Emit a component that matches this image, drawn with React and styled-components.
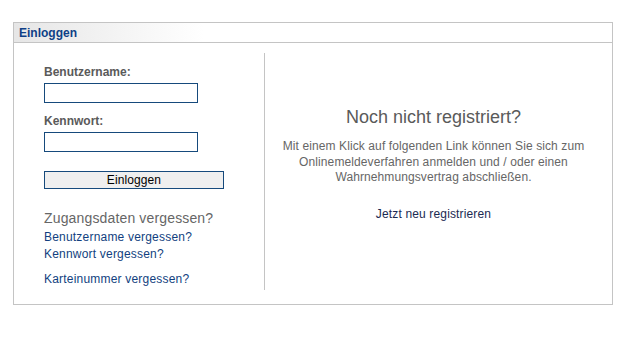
import React from 'react';
import styled, { createGlobalStyle } from 'styled-components';

const Global = createGlobalStyle`
  body {
    margin: 0;
    background: #fff;
    font-family: "Liberation Sans", Arial, sans-serif;
  }
`;

const Page = styled.div`
  padding: 22px 0 0 13px;
`;

const Box = styled.div`
  width: 598px;
  height: 281px;
  border: 1px solid #c4c4c4;
  display: flex;
  flex-direction: column;
`;

const Header = styled.div`
  height: 19px;
  border-bottom: 1px solid #c4c4c4;
  background: linear-gradient(90deg, #e6e6e6 0px, #f6f6f6 120px, #fff 190px);
  display: flex;
  align-items: center;
  padding-left: 5px;
`;

const HeaderTitle = styled.span`
  font-size: 12px;
  font-weight: bold;
  color: #0f3f86;
`;

const Body = styled.div`
  display: flex;
  padding: 10px 0 14px 0;
  flex: 1;
`;

const LeftCol = styled.div`
  width: 220px;
  padding-left: 30px;
  border-right: 1px solid #c4c4c4;
  display: flex;
  flex-direction: column;
`;

const Label = styled.label`
  font-size: 12px;
  line-height: 14px;
  font-weight: bold;
  color: #5a5a5a;
  margin-top: ${(p) => p.$top}px;
`;

const Input = styled.input`
  box-sizing: border-box;
  width: 154px;
  height: 20px;
  margin-top: 4px;
  border: 1px solid #164a7c;
  background: #fff;
  outline: none;
  padding: 0 3px;
`;

const Button = styled.button`
  box-sizing: border-box;
  width: 180px;
  height: 18px;
  margin-top: 19px;
  border: 1px solid #164a7c;
  background: #efefef;
  font-family: "Liberation Sans", Arial, sans-serif;
  font-size: 12px;
  letter-spacing: 0.1px;
  color: #000;
  padding: 0;
  line-height: 16px;
`;

const Forgot = styled.div`
  font-size: 14px;
  line-height: 16px;
  letter-spacing: 0.15px;
  color: #666;
  margin-top: 21px;
`;

const SmallLink = styled.a`
  font-size: 12px;
  line-height: 17px;
  letter-spacing: 0.2px;
  color: #123f80;
  text-decoration: none;
  margin-top: ${(p) => p.$top || 0}px;
`;

const RightCol = styled.div`
  flex: 1;
  display: flex;
  flex-direction: column;
  align-items: center;
  text-align: center;
  padding-right: 10px;
`;

const Heading = styled.div`
  font-size: 18px;
  line-height: 20px;
  color: #5a5a5a;
  margin-top: 54px;
`;

const Text = styled.p`
  font-size: 12px;
  line-height: 15.5px;
  letter-spacing: 0.1px;
  color: #666;
  margin: 12px 0 0;
  width: 330px;
`;

const RegisterLink = styled.a`
  font-size: 12px;
  line-height: 14px;
  letter-spacing: 0.15px;
  color: #1b2a52;
  text-decoration: none;
  margin-top: 21px;
`;

export default function App() {
  return (
    <Page>
      <Global />
      <Box>
        <Header>
          <HeaderTitle>Einloggen</HeaderTitle>
        </Header>
        <Body>
          <LeftCol>
            <Label $top={12}>Benutzername:</Label>
            <Input type="text" />
            <Label $top={11}>Kennwort:</Label>
            <Input type="password" />
            <Button>Einloggen</Button>
            <Forgot>Zugangsdaten vergessen?</Forgot>
            <SmallLink href="#" $top={3}>Benutzername vergessen?</SmallLink>
            <SmallLink href="#">Kennwort vergessen?</SmallLink>
            <SmallLink href="#" $top={8}>Karteinummer vergessen?</SmallLink>
          </LeftCol>
          <RightCol>
            <Heading>Noch nicht registriert?</Heading>
            <Text>
              Mit einem Klick auf folgenden Link können Sie sich zum
              Onlinemeldeverfahren anmelden und / oder einen
              Wahrnehmungsvertrag abschließen.
            </Text>
            <RegisterLink href="#">Jetzt neu registrieren</RegisterLink>
          </RightCol>
        </Body>
      </Box>
    </Page>
  );
}
